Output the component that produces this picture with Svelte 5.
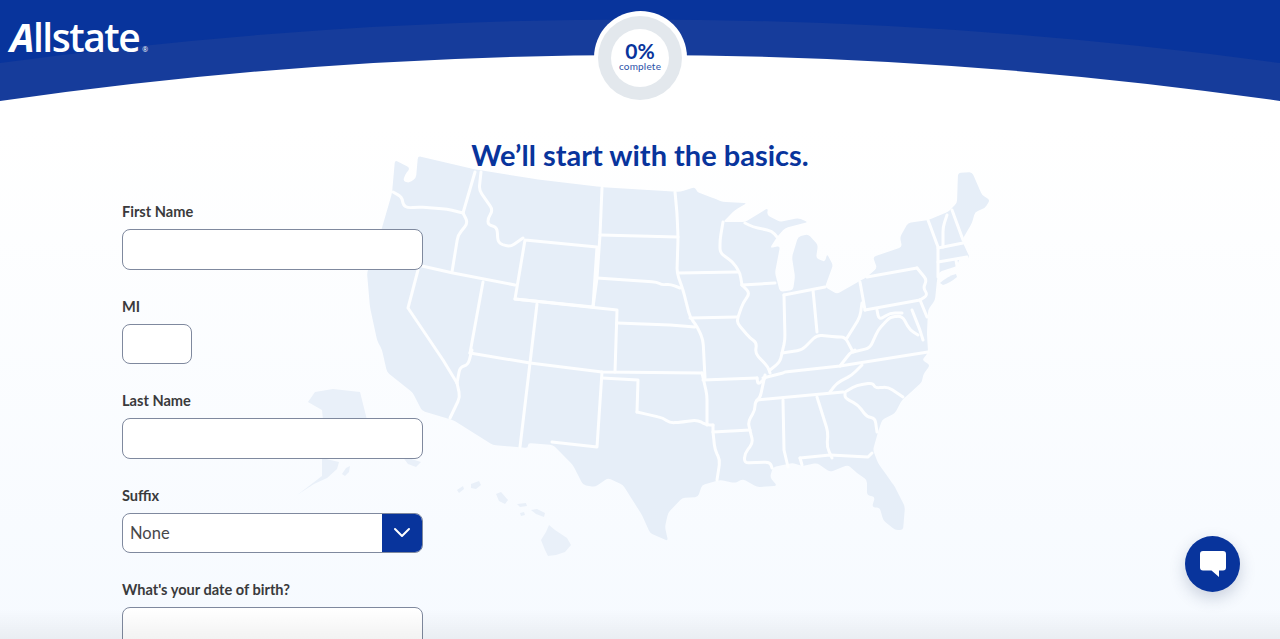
<script>
  function parse(str) {
    const n = str.trim().split(/\s+/).map(Number);
    const pts = [];
    for (let i = 0; i < n.length; i += 2) pts.push([n[i], n[i + 1]]);
    return pts;
  }
  function toward(a, b, r) {
    const dx = b[0] - a[0], dy = b[1] - a[1];
    const len = Math.hypot(dx, dy) || 1;
    const k = Math.min(r, len / 2) / len;
    return [a[0] + dx * k, a[1] + dy * k];
  }
  function fmt(p) { return p[0].toFixed(1) + " " + p[1].toFixed(1); }
  function rounded(str, r, closed) {
    const p = parse(str);
    const c = p.length;
    let d = "";
    for (let i = 0; i < c; i++) {
      if (!closed && (i === 0 || i === c - 1)) {
        d += (i === 0 ? "M" : "L") + fmt(p[i]);
        continue;
      }
      const prev = p[(i - 1 + c) % c], next = p[(i + 1) % c];
      const a = toward(p[i], prev, r), b = toward(p[i], next, r);
      d += (i === 0 ? "M" : "L") + fmt(a) + "Q" + fmt(p[i]) + " " + fmt(b);
    }
    return d + (closed ? "Z" : "");
  }

  const land = "395 160 410 168 405 175 403 181 409 183 416 178 418 156 473 169 535 179 600 187 680 192 695 187 697 192 713 198 723 202 747 203 735 210 723 222 745 222 768 208 767 215 780 222 798 218 808 222 785 228 777 237 770 248 780 246 775 273 780 292 793 290 795 277 792 257 798 237 808 234 818 245 816 258 825 262 827 254 833 265 825 287 837 294 858 282 867 277 877 268 873 257 902 247 900 237 908 223 928 220 948 212 957 203 958 173 972 172 982 195 990 200 985 208 975 212 972 223 962 240 963 243 970 258 960 257 957 266 939 272 937 280 935 300 928 310 927 333 928 353 922 360 930 365 923 375 922 382 910 393 902 400 895 413 882 420 878 432 873 450 878 463 890 480 895 487 905 507 903 530 895 530 883 520 880 508 872 507 875 497 867 495 867 480 857 473 848 465 830 472 817 463 802 466 793 463 773 467 770 477 777 486 757 487 743 479 735 483 720 480 702 485 698 497 682 498 668 513 665 527 668 541 650 533 642 515 623 485 608 478 595 487 583 485 573 465 553 445 528 443 528 448 493 445 453 420 422 411 413 393 387 372 382 350 377 340 370 307 367 273 382 228 392 193";
  const longIsland = "M940 283Q948 276 956 274L957 277Q950 283 943 285Z";

  const straight = [
    "475 172 463 213",
    "422 266 453 273 515 285",
    "525 240 515 299 593 307 597 247 525 240",
    "602 188 600 235 597 278 593 307",
    "600 235 678 237",
    "515 299 617 310 615 372",
    "537 304 530 363 520 447",
    "617 323 670 325 695 327",
    "483 282 470 353",
    "418 270 408 308 443 360 457 383",
    "470 353 530 363 602 372 702 373",
    "602 372 597 447 552 442",
    "602 378 638 380 637 412",
    "783 400 784 450 788 467",
    "757 400 843 392",
    "763 378 783 373 785 372 840 366 928 352",
    "678 273 738 272",
    "742 285 775 283",
    "690 318 737 317",
    "784 295 825 287",
    "813 290 817 332",
    "860 282 865 310",
    "867 277 917 268",
    "920 300 865 310",
    "928 220 938 247 938 277",
    "952 210 963 240",
    "938 248 963 243",
    "938 262 967 257",
    "956 260 957 266",
    "920 300 927 317",
    "800 458 830 455 868 457 872 453",
    "800 458 802 465",
    "713 425 713 432 750 430",
    "703 380 757 378"
  ];
  const rivers = [
    "393 192 402 197 403 205 408 208 418 207 447 209 463 213",
    "463 213 468 223 458 235 452 272",
    "481 172 479 190 493 210 488 218 488 225 497 227 498 243 510 247 523 238",
    "597 278 657 282 662 285 670 284 680 288",
    "675 192 677 213 678 237 677 273 683 290 690 317 698 328 703 340 705 378",
    "457 383 460 397 450 418",
    "457 383 460 367 468 365 472 350",
    "637 412 650 415 663 418 670 423 683 422 697 420 707 425 713 425",
    "702 373 707 395 707 425",
    "757 378 758 385 765 378",
    "765 375 760 398 755 402 755 410 748 422 750 430 753 443 745 453 744 463 770 462 772 468",
    "713 432 715 450 720 460 717 480",
    "817 397 828 432 827 447 832 458",
    "845 393 845 398 858 405 867 417 875 418 877 432",
    "845 392 857 385 873 383 875 388 888 387 903 397",
    "830 392 837 383 852 375 862 365",
    "840 366 850 353 855 350",
    "723 222 720 240 720 253 733 262 740 273 742 285",
    "742 285 750 293 743 303 738 317 737 323 750 338 757 343 755 353 768 367 770 373",
    "784 295 785 340 782 353 780 362 770 370",
    "782 353 802 350 817 335 837 337 845 337 853 352",
    "862 303 860 317 847 338",
    "917 268 927 280 923 288 928 295 920 300",
    "947 215 943 227 943 247",
    "853 352 870 348 878 330 890 317 902 316 910 330 918 335",
    "877 310 879 320 890 313 902 313",
    "912 310 920 330 923 340",
    "745 223 753 227 772 231 777 237"
  ];
  const hawaii = [
    "M457 490L463 486L464 489L459 493Z",
    "M471 484L479 481L481 485L476 489L471 488Z",
    "M496 494L501 492L508 500L505 504L499 501Z",
    "M517 504L526 503L527 506L520 507Z",
    "M520 513L524 512L525 515L521 516Z",
    "M531 510L537 509L545 513L544 517L536 514Z",
    "M549 525L555 530L567 538L571 545L565 552L556 555L548 556L545 550L541 540L546 532Z"
  ];
  const alaska = [
    "M308 402L315 392L333 389L360 392L367 420L323 420L322 410Z",
    "M322 458L339 462L337 469L327 478L314 484L297 495L309 486L322 476Z",
    "M346 468L350 466L349 472L345 476L342 474Z",
    "M402 456L421 462L416 467L408 464Z"
  ];
  const fields = [
    { label: "First Name", kind: "text" },
    { label: "MI", kind: "short" },
    { label: "Last Name", kind: "text" },
    { label: "Suffix", kind: "select" },
    { label: "What's your date of birth?", kind: "text" }
  ];
</script>

<div class="page">
  <svg class="map" viewBox="0 0 1280 639" aria-hidden="true">
    <path class="land" d={rounded(land, 3, true)} />
    <path class="land" d={longIsland} />
    {#each hawaii as d}<path class="island" {d} />{/each}
    {#each alaska as d}<path class="far" {d} />{/each}
    {#each straight as s}<path class="border" d={rounded(s, 0, false)} />{/each}
    {#each rivers as s}<path class="border" d={rounded(s, 5, false)} />{/each}
  </svg>

  <header class="top">
    <svg class="arcs" viewBox="0 0 1280 102" preserveAspectRatio="none" aria-hidden="true">
      <rect width="1280" height="102" fill="#08349c" />
      <path d="M0 63Q640 -24 1280 63V102H0Z" fill="#163c9b" />
      <path d="M0 101Q640 9 1280 101V102H0Z" fill="#fff" />
    </svg>
    <div class="logo"><span class="cap">A</span>llstate<span class="reg">®</span></div>
    <div class="progress">
      <div class="ring">
        <div class="hole">
          <strong>0%</strong>
          <span>complete</span>
        </div>
      </div>
    </div>
  </header>

  <main>
    <h1>We’ll start with the basics.</h1>
    <form>
      {#each fields as f}
        <div class="field">
          <div class="label">{f.label}</div>
          {#if f.kind === "select"}
            <div class="box select">
              <span class="value">None</span>
              <span class="btn">
                <svg width="18" height="11" viewBox="0 0 18 11"><path d="M2 2L9 9L16 2" fill="none" stroke="#fff" stroke-width="2" stroke-linecap="round" stroke-linejoin="round" /></svg>
              </span>
            </div>
          {:else}
            <div class="box" class:short={f.kind === "short"}></div>
          {/if}
        </div>
      {/each}
    </form>
  </main>

  <div class="shade"></div>

  <div class="chat">
    <svg width="26" height="26" viewBox="0 0 26 26"><path d="M3 0H23a3 3 0 0 1 3 3V16.500a3 3 0 0 1-3 3H19V26L11.500 19.500H3a3 3 0 0 1-3-3V3a3 3 0 0 1 3-3Z" fill="#fff" /></svg>
  </div>
</div>

<style>
  :global(body) { margin: 0; }
  .page {
    position: relative;
    width: 1280px;
    height: 639px;
    overflow: hidden;
    background: linear-gradient(180deg, #ffffff 20%, #f6faff 100%);
    font-family: Lato, "Open Sans", sans-serif;
  }
  .map { position: absolute; left: 0; top: 0; width: 1280px; height: 639px; }
  .land { fill: #e6eef8; }
  .island { fill: #e9f0f9; }
  .far { fill: #e9f0f9; }
  .border { fill: none; stroke: #fdfeff; stroke-width: 3; stroke-linejoin: round; stroke-linecap: round; }

  .top {
    position: relative;
    height: 102px;
    display: flex;
    justify-content: center;
  }
  .arcs { position: absolute; inset: 0; width: 100%; height: 102px; }
  .logo {
    position: absolute;
    left: 10px;
    top: 13px;
    color: #fff;
    font-family: "Open Sans", sans-serif;
    font-weight: 600;
    font-size: 39px;
    line-height: 47px;
    letter-spacing: -1.5px;
  }
  .cap { font-style: italic; font-weight: 700; }
  .reg { font-size: 7px; letter-spacing: 0; margin-left: 3px; font-weight: 400; }
  .progress {
    position: relative;
    margin-top: 11px;
    width: 93px;
    height: 93px;
    border-radius: 50%;
    background: #fff;
    display: flex;
    align-items: center;
    justify-content: center;
  }
  .ring {
    width: 84px;
    height: 84px;
    border-radius: 50%;
    background: #e3e8ed;
    display: flex;
    align-items: center;
    justify-content: center;
  }
  .hole {
    box-sizing: border-box;
    width: 58px;
    height: 58px;
    padding-bottom: 3px;
    border-radius: 50%;
    background: #fff;
    display: flex;
    flex-direction: column;
    align-items: center;
    justify-content: center;
    color: #08349c;
  }
  .hole strong { font-size: 21px; line-height: 20px; font-weight: 700; }
  .hole span { font-size: 10px; line-height: 11px; letter-spacing: 0.2px; color: #2a50a8; }

  main { position: relative; }
  h1 {
    margin: 36px 0 0;
    text-align: center;
    color: #08349c;
    font-size: 29px;
    line-height: 34px;
    font-weight: 700;
  }
  form {
    margin: 31px 0 0 122px;
    width: 301px;
    display: flex;
    flex-direction: column;
    gap: 28px;
  }
  .label {
    color: #3a3a3c;
    font-size: 14.6px;
    font-weight: 700;
    line-height: 18px;
    margin-bottom: 8px;
    height: 18px;
  }
  .box {
    box-sizing: border-box;
    width: 301px;
    height: 40.500px;
    border: 1px solid #7f899e;
    border-radius: 8px;
    background: #fff;
  }
  .box.short { width: 70px; }
  .select {
    display: flex;
    justify-content: space-between;
    align-items: stretch;
    overflow: hidden;
  }
  .value { color: #47474a; font-size: 16.5px; line-height: 39px; padding-left: 7px; }
  .btn {
    width: 40px;
    background: #08349c;
    display: flex;
    align-items: center;
    justify-content: center;
  }
  .shade {
    position: absolute;
    left: 0;
    right: 0;
    bottom: 0;
    height: 30px;
    background: linear-gradient(180deg, rgba(0, 0, 0, 0), rgba(0, 0, 0, 0.05));
  }
  .chat {
    position: absolute;
    left: 1185px;
    top: 536px;
    width: 55px;
    height: 56px;
    border-radius: 50%;
    background: #08349c;
    box-shadow: 0 6px 16px rgba(40, 60, 100, 0.22);
    display: flex;
    align-items: center;
    justify-content: center;
  }
</style>
